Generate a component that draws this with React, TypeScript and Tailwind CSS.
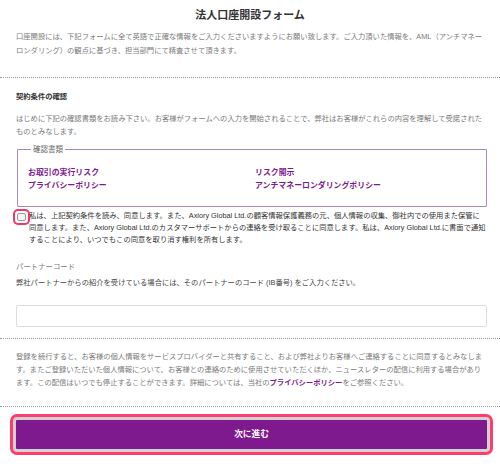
import React from "react";

const font = { fontFamily: '"Liberation Sans", "Noto Sans CJK JP", sans-serif' };

export default function App() {
  return (
    <div className="w-[500px] h-[467px] bg-white overflow-hidden" style={font}>
      <h1 className="pt-[8px] text-center text-[11px] leading-[14px] font-bold text-[#333]">
        法人口座開設フォーム
      </h1>
      <p className="mt-[8px] pl-4 pr-[13px] text-[7.3px] leading-[14px] text-[#7a7a7a]">
        口座開設には、下記フォームに全て英語で正確な情報をご入力くださいますようにお願い致します。ご入力頂いた情報を、AML（アンチマネーロンダリング）の観点に基づき、担当部門にて精査させて頂きます。
      </p>
      <div className="mt-[19px] border-t border-dotted border-[#9a9a9a]" />
      <h2 className="mt-[12px] pl-4 text-[7.3px] leading-[14px] font-bold text-[#333]">契約条件の確認</h2>
      <p className="mt-[8px] pl-4 pr-[13px] text-[7.3px] leading-[13px] text-[#7a7a7a]">
        はじめに下記の確認書類をお読み下さい。お客様がフォームへの入力を開始されることで、弊社はお客様がこれらの内容を理解して受諾されたものとみなします。
      </p>
      <div className="pl-[17px] pr-[13px]">
        <fieldset className="mt-[5px] border border-[#a58bb8] rounded-[1px] px-[10px] pt-[10px] pb-[14px]">
          <legend className="ml-[3px] px-[2px] text-[7.5px] leading-[13px] text-[#666]">確認書類</legend>
          <div className="grid grid-cols-2 text-[7.9px] leading-[13px] font-bold text-[#7d1b8d]">
            <div className="flex flex-col">
              <span>お取引の実行リスク</span>
              <span>プライバシーポリシー</span>
            </div>
            <div className="flex flex-col pl-[3px]">
              <span>リスク開示</span>
              <span>アンチマネーロンダリングポリシー</span>
            </div>
          </div>
        </fieldset>
      </div>
      <div className="mt-[3px] pl-4 pr-[13px] flex items-start">
        <div className="mt-[1px] -ml-[1px] w-[13px] h-[12px] shrink-0 rounded-[3px] shadow-[0_0_0_2px_#f0386b] bg-white flex items-center justify-center">
          <div className="w-[9px] h-[8px] border border-[#9a9a9a] rounded-[2px] bg-[#f4f4f4]" />
        </div>
        <p className="ml-[1px] text-[7.3px] leading-[12px] text-[#333]">
          私は、上記契約条件を読み、同意します。また、Axiory Global Ltd.の顧客情報保護義務の元、個人情報の収集、御社内での使用また保管に同意します。また、Axiory Global Ltd.のカスタマーサポートからの連絡を受け取ることに同意します。私は、Axiory Global Ltd.に書面で通知することにより、いつでもこの同意を取り消す権利を所有します。
        </p>
      </div>
      <div className="pl-4 pr-[13px]">
        <div className="mt-[14px] text-[7.4px] leading-[14px] text-[#7a7a7a]">パートナーコード</div>
        <div className="mt-[2px] text-[7.3px] leading-[14px] text-[#444]">
          弊社パートナーからの紹介を受けている場合には、そのパートナーのコード (IB番号) をご入力ください。
        </div>
        <input className="mt-[15px] block w-full h-[22px] border border-[#dedede] rounded-[2px] bg-white outline-none" />
      </div>
      <div className="mt-[11px] border-t border-dotted border-[#9a9a9a]" />
      <p className="mt-[11px] pl-4 pr-[13px] text-[7.3px] leading-[13px] text-[#7a7a7a]">
        登録を続行すると、お客様の個人情報をサービスプロバイダーと共有すること、および弊社よりお客様へご連絡することに同意するとみなします。またご登録いただいた個人情報について、お客様との連絡のために使用させていただくほか、ニュースレターの配信に利用する場合があります。この配信はいつでも停止することができます。詳細については、当社の<b className="font-bold text-[#7d1b8d]">プライバシーポリシー</b>をご参照ください。
      </p>
      <div className="mt-[17px] border-t border-dotted border-[#9a9a9a]" />
      <div className="pl-[13px] pr-[10px]">
        <button className="mt-[10px] block w-full h-[35px] bg-[#7e1a8e] border-[3px] border-[#d2d2d2] rounded-[4px] shadow-[0_0_0_3px_#ff3c6e] text-white text-[8.7px] font-bold">
          次に進む
        </button>
      </div>
    </div>
  );
}
